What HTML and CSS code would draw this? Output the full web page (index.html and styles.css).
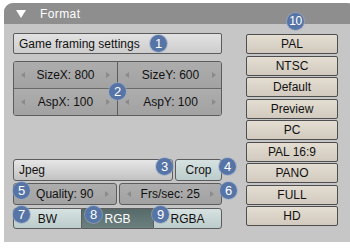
FILE: index.html
```html
<!DOCTYPE html>
<html lang="en">
<head>
    <meta charset="UTF-8">
    <title>Format Panel</title>
    <link rel="stylesheet" href="styles.css">
</head>
<body>
    <div class="panel">
        <div class="header">
            <span class="tri"></span>
            <span class="title">Format</span>
        </div>

        <div class="content">
            <div class="left">
                <div class="btn wide">Game framing settings</div>

                <div class="numgrid">
                    <div class="num"><span class="arr l"></span><span>SizeX: 800</span><span class="arr r"></span></div>
                    <div class="num"><span class="arr l"></span><span>SizeY: 600</span><span class="arr r"></span></div>
                    <div class="num"><span class="arr l"></span><span>AspX: 100</span><span class="arr r"></span></div>
                    <div class="num"><span class="arr l"></span><span>AspY: 100</span><span class="arr r"></span></div>
                </div>

                <div class="row row-jpeg">
                    <div class="menu">Jpeg</div>
                    <div class="toggle crop">Crop</div>
                </div>

                <div class="row row-quality">
                    <div class="num single"><span class="arr l"></span><span>Quality: 90</span><span class="arr r"></span></div>
                    <div class="num single"><span class="arr l"></span><span>Frs/sec: 25</span><span class="arr r"></span></div>
                </div>

                <div class="row row-color">
                    <div class="toggle c-bw">BW</div>
                    <div class="toggle c-rgb active">RGB</div>
                    <div class="toggle c-rgba">RGBA</div>
                </div>
            </div>

            <div class="right">
                <div class="preset">PAL</div>
                <div class="preset">NTSC</div>
                <div class="preset">Default</div>
                <div class="preset">Preview</div>
                <div class="preset">PC</div>
                <div class="preset">PAL 16:9</div>
                <div class="preset">PANO</div>
                <div class="preset">FULL</div>
                <div class="preset">HD</div>
            </div>
        </div>

        <!-- callout badges -->
        <span class="badge b1">1</span>
        <span class="badge b2">2</span>
        <span class="badge b3">3</span>
        <span class="badge b4">4</span>
        <span class="badge b5">5</span>
        <span class="badge b6">6</span>
        <span class="badge b7">7</span>
        <span class="badge b8">8</span>
        <span class="badge b9">9</span>
        <span class="badge b10">10</span>
    </div>
</body>
</html>
```

FILE: styles.css
```css
html, body {
    margin: 0;
    background: #fff;
    overflow: hidden;
}

body {
    font-family: "Liberation Sans", Arial, sans-serif;
    font-size: 12px;
    color: #111;
    padding: 3px 0 0 4px;
}

.panel {
    position: relative;
    width: 352px;
    height: 239px;
    background: #c6c6c6;
    border-radius: 9px 9px 0 0;
    overflow: hidden;
}

/* Header */
.header {
    height: 21px;
    background: #8e8e8e;
    display: flex;
    align-items: center;
    color: #fff;
    font-size: 12px;
}

.tri {
    width: 0;
    height: 0;
    margin: 0 14px 0 12px;
    border-left: 5px solid transparent;
    border-right: 5px solid transparent;
    border-top: 8px solid #fff;
}

.title {
    letter-spacing: 0.4px;
}

.content {
    display: flex;
    padding: 9px 0 0 9px;
}

.left {
    width: 209px;
    display: flex;
    flex-direction: column;
}

.right {
    width: 92px;
    margin: 1px 0 0 24px;
    display: flex;
    flex-direction: column;
    gap: 1.5px;
}

/* Buttons */
.btn, .menu, .toggle, .num, .preset {
    box-sizing: border-box;
    display: flex;
    align-items: center;
    border: 1px solid #5c5c5c;
    white-space: nowrap;
}

.wide {
    height: 21px;
    padding-left: 5px;
    border-radius: 2px;
    background: linear-gradient(#e2e2e2, #cdcdcd);
}

.numgrid {
    margin-top: 7px;
    display: grid;
    grid-template-columns: 104px 105px;
    grid-template-rows: 27px 26px;
    border: 1px solid #5c5c5c;
    border-radius: 3px;
    overflow: hidden;
}

.numgrid .num {
    border: 0;
    border-right: 1px solid #5c5c5c;
    border-bottom: 1px solid #6a6a6a;
}

.numgrid .num:nth-child(2n) {
    border-right: 0;
}

.numgrid .num:nth-child(n+3) {
    border-bottom: 0;
}

.num {
    background: linear-gradient(#adadad, #a2a2a2);
    justify-content: space-between;
    padding: 0 7px;
}

.arr {
    width: 0;
    height: 0;
    border-top: 3.5px solid transparent;
    border-bottom: 3.5px solid transparent;
}

.arr.l {
    border-right: 4px solid #8a8a8a;
}

.arr.r {
    border-left: 4px solid #8a8a8a;
}

.row {
    display: flex;
    height: 22px;
}

.row-jpeg {
    margin-top: 43px;
    gap: 2px;
}

.menu {
    flex: 1;
    padding-left: 5px;
    border-radius: 3px;
    background: linear-gradient(#e6e6e6, #c2c2c2);
}

.toggle {
    justify-content: center;
    background: linear-gradient(#d6e2e2, #bccbcb);
}

.crop {
    width: 47px;
    border-radius: 3px;
}

.row-quality {
    margin-top: 2px;
    gap: 2px;
}

.row-quality .num {
    flex: 1;
    border-radius: 3px;
}

.row-color {
    margin-top: 3px;
    height: 21px;
}

.c-bw {
    width: 69px;
    border-radius: 3px 0 0 3px;
}

.c-rgb {
    width: 71px;
    border-left: 0;
    border-right: 0;
}

.c-rgba {
    flex: 1;
    border-radius: 0 3px 3px 0;
}

.toggle.active {
    background: linear-gradient(#566a6a, #6c8080);
    color: #fff;
}

.preset {
    height: 20px;
    justify-content: center;
    border-color: #4e4e4e;
    border-radius: 2px;
    background: linear-gradient(#e4ddd2, #d2cabe);
}

/* Callout badges */
.badge {
    position: absolute;
    width: 17px;
    height: 17px;
    border-radius: 50%;
    background: #5674a6;
    box-shadow: 0 0 0 1px rgba(150, 170, 200, 0.6);
    color: #fff;
    font-size: 13px;
    line-height: 17px;
    text-align: center;
}

.b1 { left: 146px; top: 32px; }
.b2 { left: 105px; top: 80px; }
.b3 { left: 152px; top: 155px; }
.b4 { left: 215px; top: 155px; }
.b5 { left: 9px; top: 179px; }
.b6 { left: 216px; top: 179px; }
.b7 { left: 9px; top: 203px; }
.b8 { left: 81px; top: 203px; }
.b9 { left: 148px; top: 203px; }
.b10 { left: 283px; top: 10px; font-size: 12px; letter-spacing: -0.5px; }
```
